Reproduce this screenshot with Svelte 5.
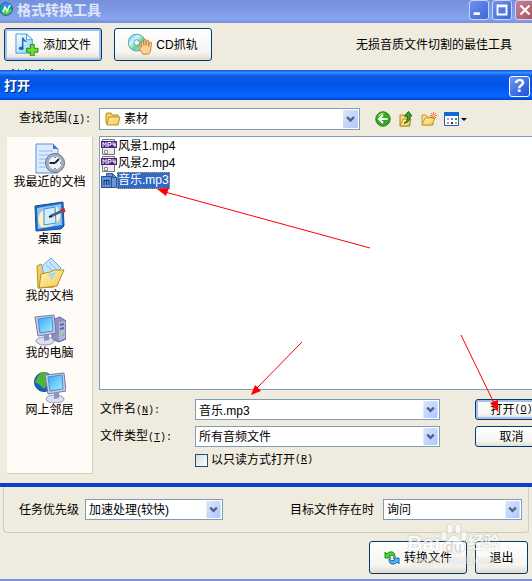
<script lang="ts">
	type Place = { id: string; label: string };

	const places: Place[] = [
		{ id: 'recent', label: '我最近的文档' },
		{ id: 'desktop', label: '桌面' },
		{ id: 'documents', label: '我的文档' },
		{ id: 'computer', label: '我的电脑' },
		{ id: 'network', label: '网上邻居' }
	];

	const files = ['风景1.mp4', '风景2.mp4', '音乐.mp3'];

	let fileName = $state('音乐.mp3');
	let readOnly = $state(false);
</script>

{#snippet chevron()}
	<svg class="chevron" viewBox="0 0 15 18" aria-hidden="true">
		<rect width="15" height="18" rx="1" fill="url(#chevron-fill)" />
		<path d="M4 7l3.5 3.5L11 7" fill="none" stroke="#4d6185" stroke-width="2.4" />
	</svg>
{/snippet}

{#snippet screen()}
	<path d="M1 3l19-2 2 18-18 3z" fill="#c9cbe6" stroke="#7478a8" />
	<path d="M4 5l14-2 1 14-13 2z" fill="url(#screen-fill)" stroke="#4a8cd0" />
	<ellipse cx="11" cy="27" rx="9" ry="4" fill="#dddff0" stroke="#9295bd" />
	<path d="M10 21l5-1v6l-5 1z" fill="#8f91bf" />
{/snippet}

<div class="window">
	<svg class="defs" aria-hidden="true">
		<defs>
			<linearGradient id="chevron-fill" x2="1" y2="1">
				<stop offset="0" stop-color="#dce6fd" />
				<stop offset="1" stop-color="#adc6fb" />
			</linearGradient>
			<linearGradient id="screen-fill" x2="1" y2="1">
				<stop offset="0" stop-color="#35a8f5" />
				<stop offset="1" stop-color="#a5efff" />
			</linearGradient>
			<linearGradient id="folder-fill" x2="1" y2="1">
				<stop offset="0" stop-color="#fff6b8" />
				<stop offset="1" stop-color="#f2c64c" />
			</linearGradient>
			<linearGradient id="page-fill" x2="1" y2="1">
				<stop offset="0" stop-color="#fff" />
				<stop offset="1" stop-color="#8ed1ff" />
			</linearGradient>
			<linearGradient id="disc-fill" x2="1" y2="1">
				<stop offset="0" stop-color="#55b4ef" />
				<stop offset="0.35" stop-color="#d3f5f5" />
				<stop offset="0.6" stop-color="#6bd08a" />
				<stop offset="1" stop-color="#d6f7d0" />
			</linearGradient>
		</defs>
	</svg>

	<header class="titlebar">
		<svg class="app-icon" viewBox="0 0 14 14" aria-hidden="true">
			<circle cx="6" cy="7" r="6.3" fill="#19a7a1" stroke="#0c6290" />
			<path d="M1 4Q5-1 10 2L6 6z" fill="#2a8ee0" />
			<path d="M2 11Q8 15 12 8L7 7z" fill="#5ad638" />
			<path d="M3 10l2-5 2 4 3-6" fill="none" stroke="#fff" stroke-width="1.5" />
		</svg>
		<h1>格式转换工具</h1>
		<div class="caption-buttons">
			<button class="caption" aria-label="最小化">
				<svg viewBox="0 0 20 20"><path d="M4 14h7" stroke="#fff" stroke-width="3" /></svg>
			</button>
			<button class="caption" aria-label="最大化">
				<svg viewBox="0 0 20 20"><path d="M5 5h10v10H5zM5 6h10" fill="none" stroke="#fff" stroke-width="2" /></svg>
			</button>
			<button class="caption close" aria-label="关闭">
				<svg viewBox="0 0 20 20"><path d="M5 5l10 10M15 5L5 15" stroke="#fff" stroke-width="2.4" /></svg>
			</button>
		</div>
	</header>

	<div class="toolbar">
		<button class="btn tool focused">
			<svg class="tool-icon" viewBox="0 0 25 24" aria-hidden="true">
				<path d="M1 1h11l6 6v14H1z" fill="url(#page-fill)" stroke="#3d9edb" />
				<path d="M12 1v6h6z" fill="#fff" stroke="#3d9edb" />
				<path d="M8 16V5q1 3 4 4" fill="none" stroke="#176fb5" stroke-width="1.5" />
				<ellipse cx="6.5" cy="16" rx="2.5" ry="2" fill="#176fb5" />
				<path d="M16 12h4v4h4v4h-4v4h-4v-4h-4v-4h4z" fill="#74da2c" stroke="#218a16" />
			</svg>
			添加文件
		</button>
		<button class="btn tool">
			<svg class="tool-icon" viewBox="0 0 25 24" aria-hidden="true">
				<circle cx="9" cy="10" r="8.8" fill="url(#disc-fill)" stroke="#4d9ebc" />
				<circle cx="9" cy="10" r="3" fill="#e8f4ff" stroke="#5b9cc4" />
				<path
					d="M14 20l-3-5q0-2 2-1l1 1V9q1-1 2 0l.5 4V7q1-1 2 0l.5 6 .5-5q1-1 2 0v6l1-4q1-1 2 0l-1 9-2 3h-6z"
					fill="#fbd29a"
					stroke="#c17f38"
				/>
			</svg>
			CD抓轨
		</button>
		<p class="tagline">无损音质文件切割的最佳工具</p>
	</div>

	<!-- Top edge of the list heading that the dialog covers -->
	<svg class="covered" viewBox="0 0 60 1" aria-hidden="true">
		<path d="M12 0h2M18 0h1M25 0h2M29 0h1M39 0h2M43 0h1M51 0h2" stroke="#2850a0" stroke-width="2" />
	</svg>

	<section class="dialog" aria-label="打开">
		<header class="dialog-title">
			<h2>打开</h2>
			<button class="help" aria-label="帮助">?</button>
		</header>

		<div class="dialog-body">
			<div class="lookup">
				<label for="look-in">查找范围<span class="key">(<u>I</u>):</span></label>
				<div class="combo look">
					<svg class="folder" viewBox="0 0 16 14" aria-hidden="true">
						<path d="M1 2l1-1h4l1 2h6v9H2l-1-1z" fill="#f7d35e" stroke="#b08a20" />
						<path d="M2 13L4 5h11l-2 8z" fill="url(#folder-fill)" stroke="#b9901f" />
					</svg>
					<select id="look-in"><option>素材</option></select>
					{@render chevron()}
				</div>
				<nav class="nav-icons">
					<button class="icon-btn" aria-label="后退">
						<svg viewBox="0 0 16 16">
							<circle cx="8" cy="8" r="7.2" fill="#37a820" stroke="#1b8212" />
							<path d="M2.5 6Q5 1 10 2Q6 4 2.5 6" fill="#a2e27e" />
							<path d="M12.5 8h-8M8 4L4 8l4 4" fill="none" stroke="#fff" stroke-width="2" />
						</svg>
					</button>
					<button class="icon-btn" aria-label="向上一级">
						<svg viewBox="0 0 16 16">
							<path d="M2 4h4l1 2h5v9H2z" fill="#f7dc76" stroke="#b58d20" />
							<path d="M2 15l3-7h8l-2 7z" fill="url(#folder-fill)" stroke="#b58d20" />
							<path d="M6 12q4-1 3.5-7h-3l4-4.5L14 5h-2q0 7-6 7z" fill="#3aa62b" stroke="#176b13" />
						</svg>
					</button>
					<button class="icon-btn" aria-label="新建文件夹">
						<svg viewBox="0 0 16 16">
							<path d="M1 4h4l1 2h6v8H1z" fill="#f8de83" stroke="#c59a35" />
							<path d="M1 14l3-7h10l-3 7z" fill="url(#folder-fill)" stroke="#c59a35" />
							<path d="M12.5 1v7M9 4.5h7M10 2l5 5M15 2l-5 5" stroke="#fa6a3c" />
							<circle cx="12.5" cy="4.5" r="1.3" fill="#ffd37a" />
						</svg>
					</button>
					<button class="icon-btn wide" aria-label="查看">
						<svg viewBox="0 0 23 16">
							<path d="M.5 1.5h14v13H.5z" fill="#fff" stroke="#1b61c4" />
							<path d="M0 1h15v4H0z" fill="#1467d8" />
							<path d="M3 7h2v2H3z" fill="#a9a3cd" />
							<path d="M7 7h2v2H7z" fill="#5b7fd1" />
							<path d="M11 7h2v2h-2z" fill="#2b9a31" />
							<path d="M3 11h2v2H3z" fill="#f0795b" />
							<path d="M7 11h2v2H7z" fill="#15309a" />
							<path d="M11 11h2v2h-2z" fill="#cda11c" />
							<path d="M17 7h6l-3 3z" fill="#000" />
						</svg>
					</button>
				</nav>
			</div>

			<div class="browse">
				<aside class="places">
					{#each places as place (place.id)}
						<button class="place">
							<svg viewBox="0 0 32 32" aria-hidden="true">
								{#if place.id === 'recent'}
									<path d="M2 1h17l5 5v24H2z" fill="#dcebff" stroke="#5f8fd9" />
									<path d="M19 1v5h5z" fill="#3e78cf" />
									<path d="M5 8h14M5 12h12M5 16h8M5 20h6M5 24h6" stroke="#93b6ee" />
									<circle cx="21" cy="20" r="9.5" fill="#a7b3bf" stroke="#65717d" />
									<circle cx="21" cy="20" r="7" fill="#e6f6ff" stroke="#8ca2b5" />
									<path d="M21 20l4-4M21 20h-5" stroke="#17242e" stroke-width="1.8" />
									<path d="M21 14v1M21 25v1M27 20h-1M15 20h1" stroke="#ee6b35" stroke-width="2" />
								{:else if place.id === 'desktop'}
									<path d="M1 6l28-4 1 24-3 3-25 2z" fill="#1d6cc8" stroke="#164f9d" />
									<path d="M3 8l24-4 1 21-24 4z" fill="#8fc8f7" />
									<path d="M5 15Q9 7 23 7q6 8 1 15-8 6-17 5-4-5-2-12z" fill="#fff0bd" />
									<path d="M10 9l11-2 1 16-12 2z" fill="#d3ecff" stroke="#3f8ed4" />
									<path d="M17 16l11-5" stroke="#386991" stroke-width="3" />
									<path d="M15 17l3-1" stroke="#222" stroke-width="2" />
									<path d="M27 11l4-1" stroke="#c62f1d" stroke-width="4" />
								{:else if place.id === 'documents'}
									<path d="M3 9l4-2 4 4 14 1-5 18-16 1z" fill="#f1cf60" stroke="#b38f24" />
									<path d="M8 9l9-8 10 10-9 12-9-8z" fill="#c3e4fd" stroke="#62a9de" />
									<path d="M12 8l8 7M15 5l8 8" stroke="#83bdea" />
									<path d="M5 31l2-14 9-2 4-2h10l-7 16z" fill="url(#folder-fill)" stroke="#b38f24" />
									<path d="M14 17l8-2-4 8z" fill="#a9d8ee" />
								{:else if place.id === 'computer'}
									<path d="M18 6l8-3 6 4v18l-7 3-7-3z" fill="#8e90c1" stroke="#666a9b" />
									<path d="M25 8l6-1v17l-6 3z" fill="#b4b6dc" />
									<path d="M26 11l4-1M26 15l4-1" stroke="#6165a0" stroke-width="2" />
									<path d="M28 21h2" stroke="#51e03e" stroke-width="2" />
									{@render screen()}
								{:else}
									<circle cx="10" cy="11" r="9.5" fill="#1762c6" stroke="#164a8f" />
									<path d="M4 5q5-6 10-3l-3 5 4 4-5 7-5-5-4-2z" fill="#49b931" />
									<g transform="translate(10 1)">{@render screen()}</g>
								{/if}
							</svg>
							<span>{place.label}</span>
						</button>
					{/each}
				</aside>

				<div class="main">
					<ul class="files">
						{#each files as file (file)}
							<li class:selected={file === fileName}>
								<button class="file" onclick={() => (fileName = file)}>
									{#if file.endsWith('.mp4')}
										<svg viewBox="0 0 16 16" aria-hidden="true">
											<path d="M1.500 .5h12v15h-12z" fill="#ececec" stroke="#777" />
											<path d="M0 2h16v7H0z" fill="#4c2385" />
											<path
												d="M2 8V3.500l1.500 2 1.500-2V8M7 8V3.500h3v2.500H7M12 3v3h3M14 3.500V8"
												fill="none"
												stroke="#fff"
											/>
											<path d="M3.500 11.500h3v3h-3z" fill="#fff" stroke="#888" />
										</svg>
									{:else}
										<svg viewBox="0 0 16 16" aria-hidden="true">
											<path d="M5.500 .5h6l4 4v10h-10z" fill="#6a96d8" stroke="#2d589f" />
											<path d="M11.500 .5v4h4" fill="none" stroke="#2d589f" />
											<path d="M.5 3.500h10v11H.5z" fill="#5e91d6" stroke="#254f98" />
											<path d="M3 12V7.500h5V12M5.500 7.500V12" fill="none" stroke="#15397d" />
										</svg>
									{/if}
									<span class="file-name">{file}</span>
								</button>
							</li>
						{/each}
					</ul>

					<div class="form">
						<div class="fields">
							<label for="file-name">文件名<span class="key">(<u>N</u>):</span></label>
							<div class="combo">
								<input id="file-name" type="text" bind:value={fileName} />
								{@render chevron()}
							</div>
							<label for="file-type">文件类型<span class="key">(<u>T</u>):</span></label>
							<div class="combo">
								<select id="file-type"><option>所有音频文件</option></select>
								{@render chevron()}
							</div>
							<label class="check">
								<input type="checkbox" bind:checked={readOnly} />
								以只读方式打开<span class="key">(<u>R</u>)</span>
							</label>
						</div>
						<div class="dialog-actions">
							<button class="btn small focused">打开<span class="key">(<u>O</u>)</span></button>
							<button class="btn small">取消</button>
						</div>
					</div>
				</div>
			</div>
		</div>

		<svg class="arrows" viewBox="0 0 532 417" aria-hidden="true">
			<g fill="none" stroke="#f00">
				<path d="M370 178L165 122" />
				<path d="M302 272L256 319" />
				<path d="M461 265L494 333" />
			</g>
			<g fill="#f00">
				<path d="M157 119l12-1-3 8z" />
				<path d="M251 325l4-10 6 6z" />
				<path d="M498 342l-8-9 8-3z" />
			</g>
		</svg>
	</section>

	<div class="options">
		<label for="priority">任务优先级</label>
		<div class="combo priority">
			<select id="priority"><option>加速处理(较快)</option></select>
			{@render chevron()}
		</div>
		<label class="exists" for="exists">目标文件存在时</label>
		<div class="combo policy">
			<select id="exists"><option>询问</option></select>
			{@render chevron()}
		</div>
	</div>

	<footer class="actions">
		<button class="btn convert">
			<svg class="swap" viewBox="0 0 16 16" aria-hidden="true">
				<path d="M1 2v6h6L5 6q3-2 6 1 0-6-5-5-2 0-3 2z" fill="#55cf35" stroke="#1d8a1b" />
				<path d="M15 14V8H9l2 2q-3 2-6-1 0 6 5 5 2 0 3-2z" fill="#50b5f0" stroke="#1769ab" />
			</svg>
			转换文件
		</button>
		<button class="btn exit">退出</button>
		<div class="watermark" aria-hidden="true">
			<div class="mark">
				<span>Bai</span>
				<span class="du">
					<svg class="paw" viewBox="0 0 28 32">
						<ellipse cx="4" cy="13" rx="3" ry="5" />
						<ellipse cx="10" cy="6" rx="3" ry="5" />
						<ellipse cx="18" cy="6" rx="3" ry="5" />
						<ellipse cx="24" cy="13" rx="3" ry="5" />
						<path d="M14 12q4 0 6 5 6 4 5 9-2 5-11 4-9 1-11-4-1-5 5-9 2-5 6-5z" />
					</svg>
					<span class="du-text">du</span>
				</span>
				<span class="exp">经验</span>
			</div>
			<div class="site">jingyan.baidu.com</div>
		</div>
	</footer>
</div>

<style>
	:global(body) {
		background: #efebde;
	}

	.window {
		position: relative;
		overflow: hidden;
		background: #efebde;
		border-bottom: 2px solid #7b8ee0;
		color: #000;
		font: 12px/14px 'Liberation Sans', 'Noto Sans CJK SC', sans-serif;
	}

	.window * {
		box-sizing: border-box;
	}

	.window svg {
		flex: none;
		display: block;
	}

	.window .defs {
		position: absolute;
		width: 0;
		height: 0;
	}

	button,
	input,
	select {
		margin: 0;
		padding: 0;
		border: 0;
		background: none;
		color: inherit;
		font: inherit;
	}

	h1,
	h2,
	p,
	ul {
		margin: 0;
		padding: 0;
	}

	label {
		white-space: nowrap;
	}

	.key {
		font: 10px/14px 'Liberation Mono', monospace;
	}

	.titlebar {
		display: flex;
		align-items: center;
		height: 23px;
		background: linear-gradient(#7890dc, #7f9ae6 50%, #86a5ee 80%, #7890dc);
	}

	.app-icon {
		width: 14px;
		height: 14px;
		margin: 0 3px 6px 0;
	}

	h1 {
		padding-bottom: 4px;
		color: #dde6fb;
		font-size: 14px;
		line-height: 18px;
	}

	.caption-buttons {
		display: flex;
		gap: 3px;
		margin: 0 -3px 3px auto;
	}

	.caption {
		width: 20px;
		height: 20px;
		border: 1px solid #c8d6fa;
		border-radius: 3px;
		background: linear-gradient(135deg, #6f92ea, #3f65d8);
	}

	.caption.close {
		background: linear-gradient(135deg, #c98494, #a9525f);
	}

	.caption svg {
		width: 18px;
		height: 18px;
	}

	.toolbar {
		display: flex;
		align-items: center;
		gap: 12px;
		padding: 5px 20px 8px 4px;
	}

	.covered {
		width: 60px;
		height: 1px;
	}

	.btn {
		display: flex;
		align-items: center;
		justify-content: center;
		border: 1px solid #003c74;
		border-radius: 3px;
		background: linear-gradient(#fff, #f6f5f0 75%, #dfdbd0);
		white-space: nowrap;
	}

	.btn.focused {
		box-shadow: inset 0 0 0 2px #a9c0ee;
	}

	.tool {
		gap: 4px;
		width: 98px;
		height: 33px;
	}

	.tool-icon {
		width: 24px;
		height: 23px;
	}

	.tagline {
		margin-left: auto;
	}

	.dialog {
		position: relative;
		border-bottom: 4px solid #0a3fd0;
		background: #efebde;
	}

	.dialog-title {
		display: flex;
		align-items: center;
		justify-content: space-between;
		height: 30px;
		padding: 2px 2px 0 4px;
		background: linear-gradient(#0a52d8, #3a8bff 8%, #0a5ae8 20%, #0054e3 50%, #0462fa 75%, #0464ff 90%, #0040c8);
		color: #fff;
	}

	h2 {
		font-size: 13px;
		line-height: 18px;
		text-shadow: 1px 1px #0a2a7a;
	}

	.help {
		width: 21px;
		height: 21px;
		border: 1px solid #fff;
		border-radius: 3px;
		background: linear-gradient(135deg, #6d97f5, #1c4fd6);
		font-size: 18px;
		font-weight: bold;
		line-height: 18px;
	}

	.dialog-body {
		padding: 8px 0 9px 7px;
	}

	.lookup {
		display: grid;
		grid-template-columns: 85px minmax(0, 261px) auto;
		column-gap: 7px;
		align-items: center;
	}

	.lookup label {
		padding-left: 12px;
	}

	.combo {
		position: relative;
		display: flex;
		align-items: center;
		height: 21px;
		border: 1px solid #7f9db9;
		background: #fff;
	}

	.combo input,
	.combo select {
		flex: 1;
		min-width: 0;
		height: 19px;
		padding: 0 18px 0 3px;
		outline: 0;
		appearance: none;
	}

	.window .chevron {
		position: absolute;
		top: 1px;
		right: 1px;
		width: 15px;
		height: calc(100% - 2px);
		pointer-events: none;
	}

	.look {
		height: 22px;
		padding-left: 5px;
	}

	.folder {
		width: 16px;
		height: 14px;
	}

	.nav-icons {
		display: flex;
		gap: 7px;
		padding-left: 8px;
	}

	.icon-btn {
		width: 16px;
		height: 16px;
	}

	.icon-btn.wide {
		width: 23px;
	}

	.browse {
		display: flex;
		gap: 7px;
		padding-top: 6px;
	}

	.places {
		display: flex;
		flex: none;
		flex-direction: column;
		gap: 10px;
		width: 86px;
		margin: 1px -1px 0 0;
		padding-top: 6px;
		border-right: 1px solid #cfccc0;
		border-bottom: 1px solid #cfccc0;
		background: #fffbf7;
	}

	.place {
		display: flex;
		flex-direction: column;
		align-items: center;
		white-space: nowrap;
	}

	.place svg {
		width: 32px;
		height: 32px;
	}

	.place span {
		line-height: 15px;
	}

	.main {
		flex: 1;
		min-width: 0;
	}

	.files {
		height: 254px;
		padding: 1px;
		border: 1px solid #7f9db9;
		border-right: 0;
		background: #fff;
		list-style: none;
	}

	.file {
		display: flex;
		align-items: center;
		height: 17px;
	}

	.file svg {
		width: 16px;
		height: 16px;
	}

	.file-name {
		padding: 1px;
		line-height: 15px;
	}

	.selected .file-name {
		outline: 1px dotted #d79a4a;
		outline-offset: -1px;
		background: #316ac5;
		color: #fff;
	}

	.form {
		display: flex;
		gap: 35px;
		padding: 9px 0 7px;
	}

	.fields {
		display: grid;
		flex: 1;
		grid-template-columns: 95px minmax(0, 1fr);
		row-gap: 6px;
		align-items: center;
		padding-left: 1px;
	}

	.check {
		grid-column: 2;
		display: flex;
		align-items: center;
	}

	.check input {
		width: 13px;
		height: 13px;
		margin-right: 3px;
		border: 1px solid #1c5180;
		background: linear-gradient(135deg, #dcdcd7, #fff);
		appearance: none;
	}

	.check input:checked {
		background: #21a121;
	}

	.dialog-actions {
		display: flex;
		flex: none;
		flex-direction: column;
		gap: 6px;
		width: 57px;
	}

	.small {
		width: 73px;
		height: 21px;
	}

	.arrows {
		position: absolute;
		top: 0;
		left: 0;
		width: 532px;
		pointer-events: none;
	}

	.options {
		display: flex;
		align-items: center;
		margin: 0 3px;
		padding: 0 6px 0 15px;
		height: 46px;
		border: 1px solid #d0ccb8;
		border-top: 0;
		border-radius: 0 0 4px 4px;
	}

	.priority {
		width: 138px;
		margin-left: 6px;
	}

	.exists {
		margin-left: auto;
	}

	.policy {
		width: 139px;
		margin-left: 9px;
	}

	.actions {
		position: relative;
		display: flex;
		justify-content: flex-end;
		gap: 8px;
		padding: 8px 4px 5px;
	}

	.convert {
		gap: 4px;
		width: 98px;
		height: 33px;
	}

	.swap {
		width: 16px;
		height: 16px;
	}

	.exit {
		width: 53px;
		height: 33px;
	}

	.watermark {
		position: absolute;
		top: -10px;
		right: 32px;
		color: #fff;
		opacity: 0.7;
		pointer-events: none;
		text-shadow: 0 0 2px #999;
	}

	.mark {
		display: flex;
		align-items: flex-end;
		font-size: 21px;
		font-weight: bold;
		line-height: 24px;
	}

	.du {
		position: relative;
	}

	.paw {
		width: 28px;
		height: 32px;
		fill: #fff;
		stroke: #d5d2c8;
	}

	.du-text {
		position: absolute;
		right: 6px;
		bottom: 0;
		color: #d0cdc4;
		font-size: 14px;
		line-height: 16px;
		text-shadow: none;
	}

	.exp {
		font-size: 16px;
	}

	.site {
		font-size: 10px;
		line-height: 12px;
		text-align: center;
	}
</style>
